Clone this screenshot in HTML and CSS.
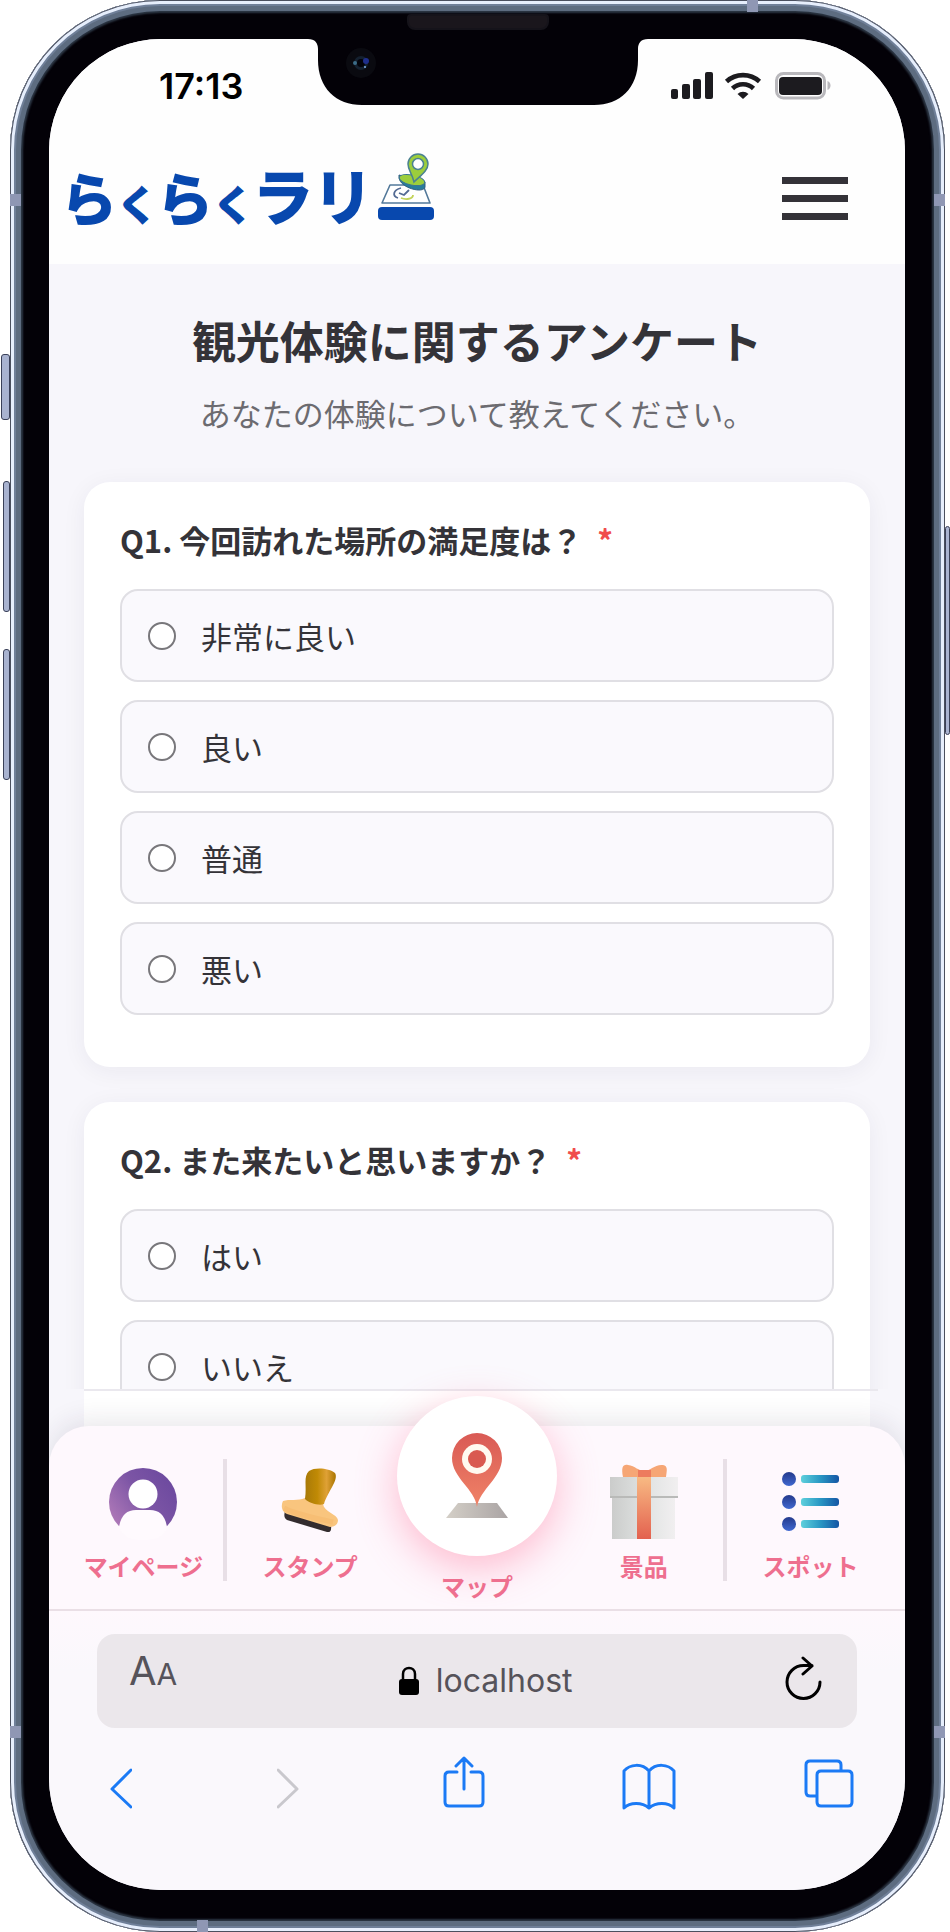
FILE: index.html
```html
<!DOCTYPE html>
<html lang="ja">
<head>
  <meta charset="UTF-8">
  <meta name="viewport" content="width=device-width, initial-scale=1.0">
  <title>らくらくラリー</title>
  <link rel="stylesheet" href="styles.css">
</head>
<body>
  <div class="phone">
    <span class="side-key key-mute"></span>
    <span class="side-key key-up"></span>
    <span class="side-key key-down"></span>
    <span class="side-key key-power"></span>
    <span class="band band-left-top"></span>
    <span class="band band-right-top"></span>
    <span class="band band-left-bottom"></span>
    <span class="band band-right-bottom"></span>
    <span class="band band-top"></span>
    <span class="band band-bottom"></span>
    <span class="speaker"></span>
    <svg class="notch" viewBox="0 0 340 68" aria-hidden="true">
      <path d="M0 0 H340 V1 C333 1 330 5 330 11 V22 C330 50 312 67 286 67 H54 C28 67 10 50 10 22 V11 C10 5 7 1 0 1 Z" fill="#030107"/>
      <circle cx="53" cy="25" r="15" fill="#0a0a10"/>
      <circle cx="53" cy="25" r="7" fill="#14202f"/>
      <circle cx="53" cy="25" r="4" fill="#03030a"/>
      <circle cx="58" cy="23" r="3" fill="#1f2f8c"/>
      <circle cx="47" cy="25" r="2" fill="#3c6c88"/>
      <circle cx="57" cy="29" r="1" fill="#7fb0e8"/>
    </svg>

    <div class="screen">
      <div class="status">
        <span class="time">17:13</span>
        <svg class="status-icons" viewBox="0 0 160 28" aria-hidden="true">
          <g fill="#1c1b1f">
            <rect x="0" y="17" width="7" height="10" rx="2"/>
            <rect x="11" y="12" width="8" height="15" rx="2"/>
            <rect x="22" y="7" width="8" height="20" rx="2"/>
            <rect x="34" y="0" width="8" height="27" rx="2"/>
            <path d="M72 27 L66.500 22 A8 8 0 0 1 77.500 22 Z"/>
            <rect x="108" y="5" width="43" height="18" rx="4"/>
          </g>
          <g fill="none" stroke="#1c1b1f" stroke-width="4.600">
            <path d="M55.500 9.500 A24.500 24.500 0 0 1 88.500 9.500"/>
            <path d="M61.500 16.500 A15 15 0 0 1 82.500 16.500"/>
          </g>
          <rect x="105.500" y="1.500" width="48" height="24.500" rx="7" fill="none" stroke="#b9b8bc" stroke-width="3"/>
          <path d="M156.500 9 C160.500 10 160.500 17 156.500 18 Z" fill="#b9b8bc"/>
        </svg>
      </div>

      <header class="header">
        <a class="logo" href="#">
          <span class="logo-text">ら<small>く</small>ら<small>く</small><b>ラリ</b></span>
          <svg class="logo-icon" viewBox="0 0 58 70" aria-hidden="true">
            <rect x="1" y="54" width="56" height="13" rx="4" fill="#0848ae"/>
            <path d="M13 32 H46 L53 50 H5 Z" fill="#fff" stroke="#53799a" stroke-width="1.600" stroke-linejoin="round"/>
            <path d="M24 35 C16 37 15 43 21 45 M22 40 L27 42 L32 37" fill="none" stroke="#536a93" stroke-width="1.800"/>
            <path d="M36 42 C36 46 29 47 24 45" fill="none" stroke="#c3d35a" stroke-width="1.800"/>
            <path d="M22 24 C22 35 47 41 48 34 L48 29 L22 22 Z" fill="#287c9b" stroke="#315c80"/>
            <ellipse cx="35" cy="27" rx="13" ry="5" transform="rotate(12 35 27)" fill="#9cce3c" stroke="#3a7590"/>
            <path d="M37 29 C35 20 31 17 31 11 A10 10 0 0 1 51 11 C51 18 43 23 37 29 Z" fill="#9cce3c" stroke="#4b8291" stroke-width="1.500"/>
            <circle cx="41" cy="11" r="5.500" fill="#fff" stroke="#4b8291" stroke-width="1.500"/>
          </svg>
        </a>
        <button class="menu-button" type="button" aria-label="メニュー">
          <span></span>
          <span></span>
          <span></span>
        </button>
      </header>

      <main class="survey">
        <h1>観光体験に関するアンケート</h1>
        <p class="lead">あなたの体験について教えてください。</p>

        <section class="card">
          <fieldset>
            <legend>Q1. 今回訪れた場所の満足度は？ <span class="required">*</span></legend>
            <div class="options">
              <label class="option"><input type="radio" name="q1"> 非常に良い</label>
              <label class="option"><input type="radio" name="q1"> 良い</label>
              <label class="option"><input type="radio" name="q1"> 普通</label>
              <label class="option"><input type="radio" name="q1"> 悪い</label>
            </div>
          </fieldset>
        </section>

        <section class="card">
          <fieldset>
            <legend>Q2. また来たいと思いますか？ <span class="required">*</span></legend>
            <div class="options">
              <label class="option"><input type="radio" name="q2"> はい</label>
              <label class="option"><input type="radio" name="q2"> いいえ</label>
            </div>
          </fieldset>
        </section>
      </main>

      <div class="tabs-area">
        <nav class="tabs">
          <a class="tab" href="#">
            <svg class="tab-icon" viewBox="0 0 76 76" aria-hidden="true">
              <defs>
                <linearGradient id="purple" x1="0" y1="1" x2="1" y2="0.300">
                  <stop offset="0" stop-color="#bd83bd"/>
                  <stop offset="0.600" stop-color="#7c55a5"/>
                  <stop offset="1" stop-color="#6d4a9f"/>
                </linearGradient>
              </defs>
              <circle cx="38" cy="38" r="34" fill="url(#purple)"/>
              <circle cx="38" cy="30" r="14.500" fill="#fff"/>
              <path d="M14 63 C16 51 22 46 31 46 H45 C54 46 60 51 62 63 C60 72 52 76 38 76 C24 76 17 72 14 63 Z" fill="#fffafe"/>
            </svg>
            <span>マイページ</span>
          </a>
          <a class="tab tab-ruled" href="#">
            <svg class="tab-icon" viewBox="0 0 76 76" aria-hidden="true">
              <defs>
                <linearGradient id="handle">
                  <stop offset="0" stop-color="#a87908"/>
                  <stop offset="0.400" stop-color="#c08a05"/>
                  <stop offset="0.700" stop-color="#dfa136"/>
                  <stop offset="1" stop-color="#a97400"/>
                </linearGradient>
              </defs>
              <path d="M13 47 L59 61 Q60 69 55 68 L15 56 Q11 54 13 47 Z" fill="#332c2e"/>
              <path d="M11 37 C17 35 26 37 33 34 L51 40 C52 48 65 50 66 56 C66 61 62 63 58 63 L15 50 C9 47 9 41 11 37 Z" fill="#f9c57e"/>
              <path d="M12 44 C22 50 43 54 61 58" fill="none" stroke="#f5b86a" stroke-width="5" opacity="0.500"/>
              <path d="M33 35 C35 21 31 13 37 7 C43 3 57 4 63 9 C67 16 56 27 52 40 C47 42 37 39 33 35 Z" fill="url(#handle)"/>
            </svg>
            <span>スタンプ</span>
          </a>
          <a class="tab tab-map" href="#">
            <span class="map-circle">
              <svg viewBox="0 0 62 88" aria-hidden="true">
                <defs>
                  <linearGradient id="pin" x1="0" y1="0" x2="0" y2="1">
                    <stop offset="0" stop-color="#d95a55"/>
                    <stop offset="1" stop-color="#f08367"/>
                  </linearGradient>
                  <linearGradient id="ground">
                    <stop offset="0" stop-color="#d4cfc7"/>
                    <stop offset="1" stop-color="#aaa4a4"/>
                  </linearGradient>
                </defs>
                <path d="M12 71 H51 L62 86 H0 Z" fill="url(#ground)"/>
                <path d="M31 75 C29 57 6 46 6 26 A25 25 0 0 1 56 26 C56 46 34 57 31 75 Z" fill="url(#pin)"/>
                <circle cx="31" cy="27" r="15" fill="#fffaf0"/>
                <circle cx="31" cy="27" r="9" fill="#d95a50"/>
              </svg>
            </span>
            <span>マップ</span>
          </a>
          <a class="tab" href="#">
            <svg class="tab-icon" viewBox="0 0 76 76" aria-hidden="true">
              <defs>
                <linearGradient id="box">
                  <stop offset="0" stop-color="#cbcccb"/>
                  <stop offset="0.500" stop-color="#dfe2e1"/>
                  <stop offset="1" stop-color="#f1eff0"/>
                </linearGradient>
                <linearGradient id="ribbon" x1="0" y1="0" x2="0" y2="1">
                  <stop offset="0" stop-color="#f8ba83"/>
                  <stop offset="1" stop-color="#e3614f"/>
                </linearGradient>
              </defs>
              <rect x="6" y="32" width="63" height="43" fill="url(#box)"/>
              <rect x="4" y="13" width="68" height="20" fill="url(#box)"/>
              <rect x="4" y="32" width="68" height="2" fill="#b9bab8"/>
              <rect x="31" y="13" width="14" height="62" fill="url(#ribbon)"/>
              <path d="M17 13 C15 3 17 0 22 1 C29 2 33 7 38 7 C44 7 49 0 57 1 C62 2 61 6 60 13 Z" fill="#f6a675"/>
              <path d="M32 6 H45 V13 H32 Z" fill="#ed7b5e"/>
            </svg>
            <span>景品</span>
          </a>
          <a class="tab tab-ruled" href="#">
            <svg class="tab-icon" viewBox="0 0 76 76" aria-hidden="true">
              <defs>
                <linearGradient id="dot" x1="0" y1="0" x2="0" y2="1">
                  <stop offset="0" stop-color="#243a8c"/>
                  <stop offset="1" stop-color="#4068d0"/>
                </linearGradient>
                <linearGradient id="bar">
                  <stop offset="0" stop-color="#5ed0dc"/>
                  <stop offset="0.500" stop-color="#2a98c4"/>
                  <stop offset="1" stop-color="#1455a4"/>
                </linearGradient>
              </defs>
              <g fill="url(#dot)">
                <circle cx="16" cy="15" r="7"/>
                <circle cx="16" cy="38" r="7"/>
                <circle cx="16" cy="60" r="7"/>
              </g>
              <g fill="url(#bar)">
                <rect x="28" y="11" width="38" height="8" rx="3"/>
                <rect x="28" y="34" width="38" height="8" rx="3"/>
                <rect x="28" y="56" width="38" height="8" rx="3"/>
              </g>
            </svg>
            <span>スポット</span>
          </a>
        </nav>
      </div>

      <footer class="browser">
        <div class="address">
          <button class="text-size" type="button">A<small>A</small></button>
          <span class="host">
            <svg viewBox="0 0 22 30" aria-hidden="true">
              <rect x="1" y="13" width="20" height="16" rx="3"/>
              <path d="M5 14 V8 C5 0 17 0 17 8 V14" fill="none" stroke="#000" stroke-width="2.500"/>
            </svg>
            localhost
          </span>
          <button class="reload" type="button" aria-label="再読み込み">
            <svg viewBox="0 0 38 44" aria-hidden="true">
              <path d="M35 26 A16.500 16.500 0 1 1 18.500 9.500 H27 M18 2 L27 10 L18 18" fill="none" stroke="#000" stroke-width="3" stroke-linecap="round" stroke-linejoin="round"/>
            </svg>
          </button>
        </div>
        <div class="toolbar">
          <button type="button" aria-label="戻る">
            <svg width="22" height="54" viewBox="0 0 22 54"><path d="M21 14 L2 33 L21 51"/></svg>
          </button>
          <button type="button" aria-label="進む" disabled>
            <svg width="22" height="54" viewBox="0 0 22 54"><path d="M1 14 L20 33 L1 51"/></svg>
          </button>
          <button type="button" aria-label="共有">
            <svg width="42" height="54" viewBox="0 0 42 54"><path d="M14 16 H6 Q2 16 2 20 V46 Q2 50 6 50 H36 Q40 50 40 46 V20 Q40 16 36 16 H28 M21 33 V2 M13 10 L21 2 L29 10"/></svg>
          </button>
          <button type="button" aria-label="ブックマーク">
            <svg width="54" height="54" viewBox="0 0 54 54"><path d="M27 15 C20 7 8 8 2 15 V52 C8 46 20 46 27 52 C34 46 46 46 52 52 V15 C46 8 34 7 27 15 V52"/></svg>
          </button>
          <button type="button" aria-label="タブ">
            <svg width="50" height="54" viewBox="0 0 50 54"><path d="M12 40 H6 Q2 40 2 36 V9 Q2 5 6 5 H33 Q37 5 37 9 V15 M17 15 H44 Q48 15 48 19 V46 Q48 50 44 50 H17 Q13 50 13 46 V19 Q13 15 17 15 Z"/></svg>
          </button>
        </div>
      </footer>
    </div>
  </div>
</body>
</html>
```
FILE: styles.css
```css
* {
  box-sizing: border-box;
}
body {
  margin: 0;
  background: #fff;
  color: #343338;
  font-family: "Noto Sans CJK JP", sans-serif;
}
button {
  padding: 0;
  border: none;
  background: none;
  color: inherit;
  cursor: pointer;
}
a {
  color: inherit;
  text-decoration: none;
}
svg {
  display: block;
}

/* phone body */
.phone {
  position: relative;
  height: 100vh;
  margin: 0 5px 0 10px;
  padding: 39px 40px 42px 39px;
  border-radius: 150px;
  background: #030107;
  box-shadow:
    inset 0 0 0 1px #4a4f5e,
    inset 0 0 0 4px #e6eefc,
    inset 0 0 0 6px #6f7f98,
    inset 0 0 0 11px #5d6c80,
    inset 0 0 2px 13px #2c3644;
}
.side-key {
  position: absolute;
  border: 1px solid #3a4058;
  border-radius: 3px;
  background: #a9b3d0;
}
.key-mute {
  left: -9px;
  top: 354px;
  width: 9px;
  height: 66px;
}
.key-up {
  left: -7px;
  top: 481px;
  width: 7px;
  height: 131px;
}
.key-down {
  left: -7px;
  top: 649px;
  width: 7px;
  height: 131px;
}
.key-power {
  right: -5px;
  top: 526px;
  width: 5px;
  height: 209px;
}
.band {
  position: absolute;
  width: 11px;
  height: 12px;
  background: #8f97b4;
}
.band-left-top {
  left: 0;
  top: 194px;
}
.band-right-top {
  right: 0;
  top: 194px;
}
.band-left-bottom {
  left: 0;
  bottom: 194px;
}
.band-right-bottom {
  right: 0;
  bottom: 194px;
}
.band-top {
  right: 187px;
  top: 0;
}
.band-bottom {
  left: 187px;
  bottom: 0;
}
.speaker {
  position: absolute;
  top: 14px;
  left: 50%;
  width: 142px;
  height: 16px;
  margin-left: -71px;
  border: 2px solid #15131a;
  border-radius: 4px 4px 8px 8px;
  background: #1a161c;
}
.notch {
  position: absolute;
  z-index: 2;
  top: 38px;
  left: 50%;
  width: 340px;
  height: 68px;
  margin-left: -170px;
}
.screen {
  display: flex;
  flex-direction: column;
  height: 100%;
  overflow: hidden;
  border-radius: 112px;
  background: #f7f6fb;
}

/* status bar and site header */
.status {
  display: flex;
  justify-content: space-between;
  align-items: center;
  height: 93px;
  padding: 0 74px 0 110px;
  background: #fefefe;
}
.time {
  color: #000;
  font: 600 36px/40px Inter, sans-serif;
}
.status-icons {
  width: 160px;
  height: 28px;
}
.header {
  display: flex;
  justify-content: space-between;
  align-items: center;
  height: 132px;
  padding: 0 57px 0 12px;
  background: #fefefe;
}
.logo {
  display: flex;
  align-items: center;
  gap: 4px;
}
.logo-text {
  color: #0848ae;
  font-size: 56px;
  font-weight: 700;
  line-height: 80px;
  -webkit-text-stroke: 2px #0848ae;
}
.logo-text small {
  font-size: 40px;
}
.logo-text b {
  font-size: 60px;
  font-weight: 700;
}
.logo-icon {
  width: 58px;
  height: 70px;
  margin-bottom: 20px;
}
.menu-button {
  display: flex;
  flex-direction: column;
  gap: 11px;
  width: 66px;
}
.menu-button span {
  height: 7px;
  background: #343238;
}

/* survey */
.survey {
  flex: 1;
  min-height: 0;
  overflow: hidden;
  padding: 44px 35px 0;
}
.survey h1 {
  margin: 0 0 18px;
  font-size: 44px;
  line-height: 64px;
  text-align: center;
}
.lead {
  margin: 0 0 46px;
  color: #6c6b70;
  font-size: 31px;
  line-height: 46px;
  text-align: center;
}
.card {
  margin-bottom: 35px;
  padding: 34px 36px 52px;
  border-radius: 26px;
  background: #fff;
  box-shadow: 0 4px 24px rgba(40, 30, 60, 0.06);
}
.card fieldset {
  margin: 0;
  padding: 0;
  border: none;
}
.card legend {
  padding: 0 0 26px;
  font-size: 31px;
  font-weight: 700;
  line-height: 47px;
}
.required {
  margin-left: 8px;
  color: #f04c4c;
}
.options {
  display: flex;
  flex-direction: column;
  gap: 18px;
}
.option {
  display: flex;
  align-items: center;
  gap: 25px;
  height: 93px;
  padding: 0 26px;
  border: 2px solid #e0dfe4;
  border-radius: 18px;
  background: #faf9fd;
  font-size: 31px;
}
.option input {
  appearance: none;
  width: 28px;
  height: 28px;
  margin: 0;
  border: 2px solid #78777b;
  border-radius: 50%;
  background: #fff;
}
.option input:checked {
  border: 8px solid #ee6f8f;
}

/* bottom tabs */
.tabs-area {
  padding-top: 37px;
  background:
    linear-gradient(#eae8ee, #eae8ee) 35px 0 / calc(100% - 62px) 2px no-repeat,
    linear-gradient(#fff, #fff) 35px 0 / calc(100% - 70px) 100% no-repeat;
}
.tabs {
  display: grid;
  grid-template-columns: repeat(5, 1fr);
  grid-template-rows: minmax(0, 1fr);
  height: 185px;
  padding: 0 11px;
  border-bottom: 2px solid #eadfe6;
  border-radius: 40px 40px 0 0;
  background: #fef8fd;
  box-shadow: 0 -6px 26px rgba(40, 30, 60, 0.1);
}
.tab {
  position: relative;
  display: flex;
  flex-direction: column;
  align-items: center;
  padding-top: 38px;
  color: #ee6f8f;
  font-size: 24px;
  font-weight: 700;
  line-height: 36px;
}
.tab-icon {
  width: 76px;
  height: 76px;
  margin-bottom: 8px;
}
.tab-ruled::before {
  content: "";
  position: absolute;
  top: 33px;
  left: -4px;
  width: 4px;
  height: 122px;
  background: #e8dfe6;
}
.tab-map {
  justify-content: flex-end;
  padding: 0 0 5px;
}
.map-circle {
  display: flex;
  flex: none;
  justify-content: center;
  align-items: center;
  width: 160px;
  height: 160px;
  margin-bottom: 12px;
  border-radius: 50%;
  background: #fff;
  box-shadow: 0 12px 40px rgba(255, 110, 150, 0.45);
}
.map-circle svg {
  width: 62px;
  height: 88px;
}

/* browser bar */
.browser {
  height: 279px;
  padding: 23px 48px 0;
  background: linear-gradient(#fef8fd, #faf8fc 60px);
}
.address {
  display: flex;
  justify-content: space-between;
  align-items: center;
  height: 94px;
  padding: 0 34px 0 32px;
  border-radius: 18px;
  background: #ebe7eb;
  color: #56535a;
  font: 400 32px/40px Inter, sans-serif;
}
.text-size {
  margin-bottom: 18px;
  font: 400 40px/40px Inter, sans-serif;
}
.text-size small {
  font-size: 30px;
}
.host {
  display: flex;
  align-items: center;
  gap: 16px;
  margin-left: 8px;
}
.host svg {
  width: 22px;
  height: 30px;
}
.reload {
  margin-bottom: 6px;
}
.reload svg {
  width: 38px;
  height: 44px;
}
.toolbar {
  display: grid;
  grid-template-columns: 167fr 166fr 178fr 182fr auto;
  justify-items: start;
  padding: 28px 3px 0 13px;
}
.toolbar path {
  fill: none;
  stroke: #1b7af5;
  stroke-width: 3;
  stroke-linecap: round;
  stroke-linejoin: round;
}
.toolbar button:disabled path {
  stroke: #c9c8cd;
}
```
